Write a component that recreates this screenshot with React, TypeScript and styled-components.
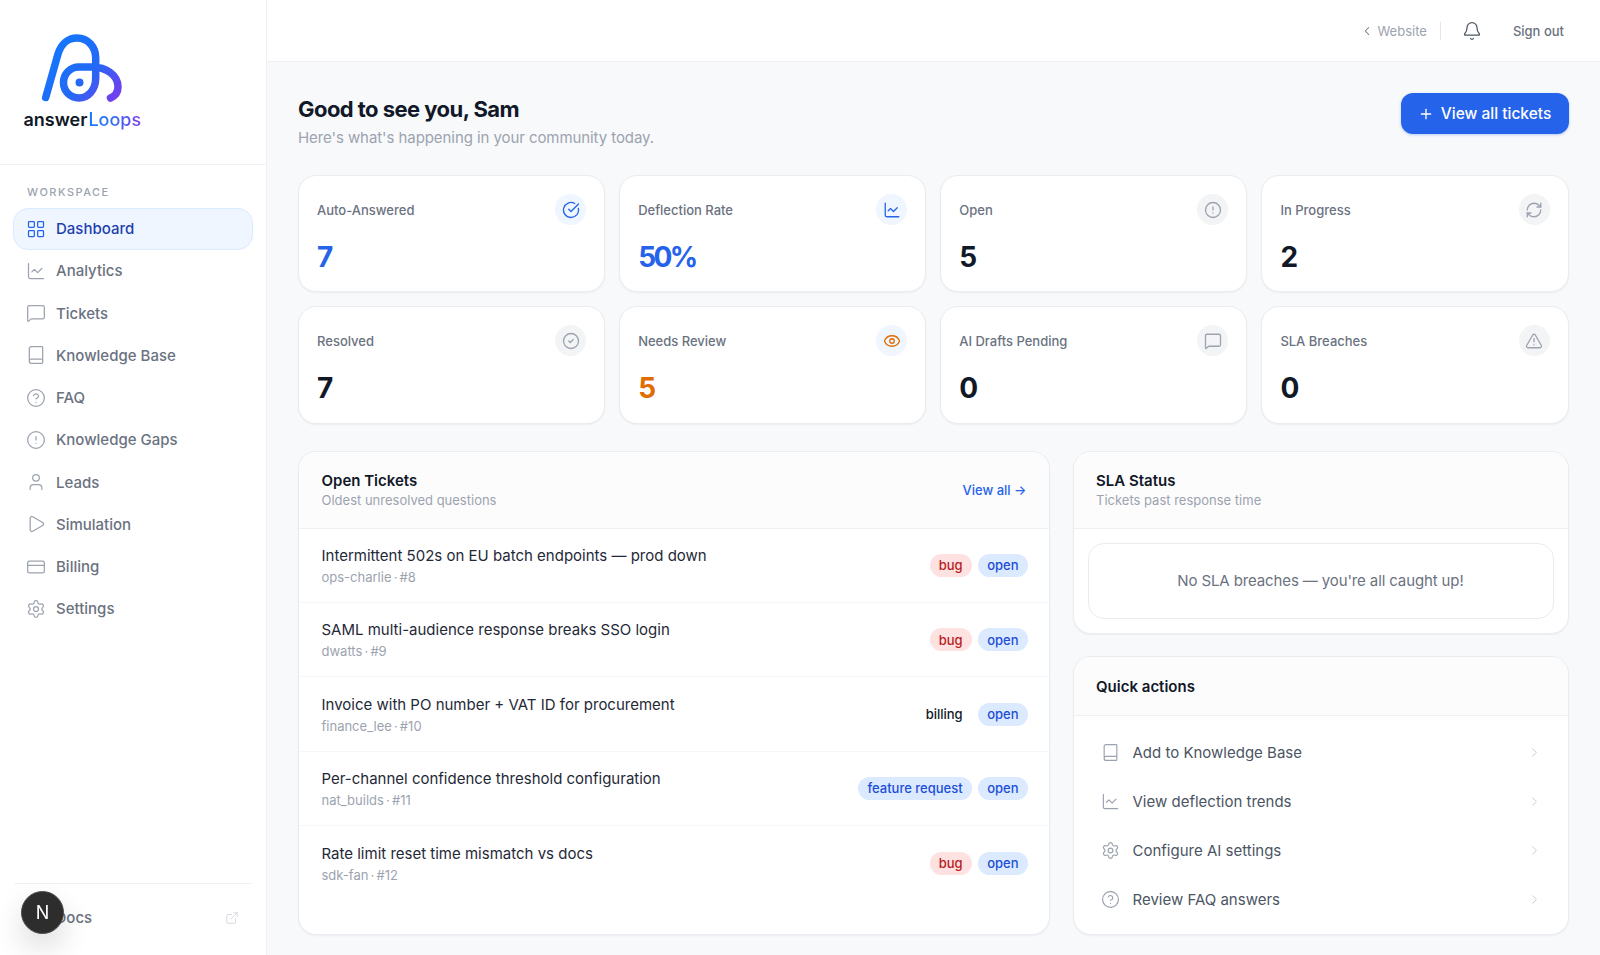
import React from "react";
import styled, { createGlobalStyle } from "styled-components";
import {
  LayoutGrid, ChartLine, MessageSquare, Book, CircleHelp, CircleAlert, User, Play, CreditCard, Settings,
  CircleCheckBig, CircleCheck, RefreshCw, TriangleAlert, Eye, ExternalLink, ChevronLeft, ChevronRight, Bell, Plus, FileText,
} from "lucide-react";

const Global = createGlobalStyle`
  html, body { margin: 0; padding: 0; height: 100%; overflow: hidden; }
  body { font-family: Inter, "Liberation Sans", sans-serif; background: #f8f9fb; color: #111827; }
  * { box-sizing: border-box; }
`;

const Shell = styled.div`
  display: flex;
  height: 100vh;
`;
const Sidebar = styled.aside`
  width: 266.5px;
  flex: none;
  background: #fff;
  border-right: 1.5px solid #eef0f3;
  display: flex;
  flex-direction: column;
`;
const LogoArea = styled.div`
  height: 165px;
  border-bottom: 1.5px solid #eef0f3;
  padding: 30px 0 0 23.5px;
`;
const LogoMark = styled.svg`
  display: block;
  margin-left: 15.5px;
`;
const LogoWord = styled.div`
  font-size: 18px;
  font-weight: 600;
  line-height: 24px;
  margin-top: 2px;
  color: #111827;
`;
const LogoAccent = styled.span`
  margin-left: 1px;
  font-weight: 500;
  background: linear-gradient(90deg, #1479ff 0%, #2f6ef5 45%, #7c3aed 100%);
  -webkit-background-clip: text;
  background-clip: text;
  color: transparent;
`;
const NavArea = styled.nav`
  flex: 1;
  padding: 19.5px 12.5px 0;
`;
const NavLabel = styled.div`
  font-size: 11px;
  line-height: 14px;
  font-weight: 500;
  letter-spacing: 0.135em;
  color: #9ca3af;
  padding-left: 14.5px;
  margin-bottom: 9px;
`;
const NavItem = styled.a<{ $active?: boolean }>`
  display: flex;
  align-items: center;
  gap: 10.5px;
  height: 42.25px;
  padding: 0 12px;
  border-radius: 15px;
  font-size: 15px;
  font-weight: 500;
  color: ${(p) => (p.$active ? "#1e40af" : "#6b7280")};
  background: ${(p) => (p.$active ? "#eff6ff" : "transparent")};
  border: 1px solid ${(p) => (p.$active ? "#dbeafe" : "transparent")};
  svg { color: ${(p) => (p.$active ? "#2563eb" : "#9ca3af")}; flex: none; }
`;
const DocsArea = styled.div`
  margin: 0 14px 0 13.5px;
  height: 72px;
  border-top: 1.5px solid #eef0f3;
  display: flex;
  align-items: center;
  padding: 0 11px 4px;
  gap: 11px;
  font-size: 15px;
  font-weight: 500;
  color: #6b7280;
  svg { color: #9ca3af; flex: none; }
`;
const DocsText = styled.span`
  flex: 1;
`;
const ExternalIcon = styled(ExternalLink)`
  && { color: #d1d5db; }
  margin-right: 2px;
`;
const DevBadge = styled.div`
  position: fixed;
  left: 21px;
  bottom: 21px;
  width: 43px;
  height: 43px;
  border-radius: 50%;
  background: #2d2d2d;
  border: 1.5px solid #4b4b4b;
  color: #fff;
  font-size: 18px;
  font-weight: 400;
  display: flex;
  align-items: center;
  justify-content: center;
  box-shadow: 0 14px 30px rgba(0, 0, 0, 0.14);
`;
const Main = styled.div`
  flex: 1;
  min-width: 0;
  display: flex;
  flex-direction: column;
`;
const TopBar = styled.header`
  height: 62px;
  flex: none;
  background: #fff;
  border-bottom: 1.5px solid #eef0f3;
  display: flex;
  align-items: center;
  justify-content: flex-end;
  padding: 0 36px 0 0;
  font-size: 13px;
`;
const BackLink = styled.a`
  display: flex;
  align-items: center;
  gap: 3px;
  color: #9ca3af;
  padding-right: 13.5px;
  border-right: 1px solid #e5e7eb;
  height: 18px;
  svg { color: #6b7280; }
`;
const BellIcon = styled(Bell)`
  color: #4b5563;
  margin: 0 31px 0 20.5px;
`;
const SignOut = styled.a`
  color: #6b7280;
  font-weight: 500;
  font-size: 13px;
`;
const Content = styled.main`
  flex: 1;
  padding: 31px 31.5px 20px 31.5px;
  display: flex;
  flex-direction: column;
`;
const PageHead = styled.div`
  display: flex;
  justify-content: space-between;
  align-items: flex-start;
  margin-bottom: 26px;
`;
const HeadText = styled.div`
  padding-top: 1px;
`;
const Title = styled.h1`
  margin: 0;
  font-size: 22px;
  line-height: 30px;
  font-weight: 700;
  letter-spacing: -0.025em;
  color: #111827;
`;
const Subtitle = styled.p`
  margin: 3px 0 0;
  font-size: 15px;
  line-height: 22px;
  letter-spacing: -0.005em;
  color: #9ca3af;
`;
const PrimaryButton = styled.button`
  height: 41px;
  width: 168px;
  border: none;
  border-radius: 12px;
  background: #2563eb;
  color: #fff;
  font: 500 15.5px Inter, sans-serif;
  display: flex;
  align-items: center;
  justify-content: center;
  gap: 7px;
  box-shadow: 0 1px 3px rgba(37, 99, 235, 0.3);
`;
const StatGrid = styled.section`
  display: grid;
  grid-template-columns: repeat(4, 1fr);
  grid-auto-rows: 117.3px;
  gap: 14px;
  margin-bottom: 27.5px;
`;
const StatCard = styled.div`
  background: #fff;
  border: 1px solid #eaecef;
  border-radius: 18px;
  padding: 18px;
  box-shadow: 0 1px 2px rgba(17, 24, 39, 0.05);
`;
const StatTop = styled.div`
  display: flex;
  justify-content: space-between;
  align-items: center;
  margin-bottom: 15px;
`;
const StatLabel = styled.span`
  font-size: 13px;
  font-weight: 500;
  color: #6b7280;
`;
const IconCircle = styled.span<{ $tint: string; $color: string }>`
  width: 31px;
  height: 31px;
  border-radius: 50%;
  background: ${(p) => p.$tint};
  color: ${(p) => p.$color};
  display: flex;
  align-items: center;
  justify-content: center;
`;
const StatValue = styled.div<{ $color: string }>`
  font-size: 28px;
  line-height: 34px;
  font-weight: 700;
  letter-spacing: -0.09em;
  color: ${(p) => p.$color};
`;
const PanelRow = styled.section`
  flex: 1;
  min-height: 0;
  display: grid;
  grid-template-columns: 1fr 496px;
  gap: 22.5px;
`;
const Panel = styled.div<{ $grow?: boolean }>`
  background: #fff;
  border: 1px solid #eaecef;
  border-radius: 18px;
  overflow: hidden;
  box-shadow: 0 1px 2px rgba(17, 24, 39, 0.05);
  flex: ${(p) => (p.$grow ? 1 : "none")};
`;
const PanelHead = styled.div<{ $compact?: boolean }>`
  height: ${(p) => (p.$compact ? "59px" : "76.5px")};
  padding: 1px 22.5px 0;
  background: #fcfcfd;
  border-bottom: 1.5px solid #eef0f3;
  display: flex;
  align-items: center;
  justify-content: space-between;
`;
const PanelTitle = styled.div`
  font-size: 15px;
  line-height: 20px;
  font-weight: 600;
  color: #111827;
`;
const PanelSub = styled.div`
  font-size: 13px;
  line-height: 19px;
  color: #9ca3af;
`;
const ViewAll = styled.a`
  font-size: 13px;
  font-weight: 500;
  color: #2563eb;
`;
const TicketRow = styled.div`
  height: 74.4px;
  padding: 0 21.5px 0 22.5px;
  display: flex;
  align-items: center;
  justify-content: space-between;
  border-bottom: 1px solid #f6f7f9;
  &:last-child { border-bottom: none; }
`;
const TicketText = styled.div`
  padding-top: 1.5px;
`;
const TicketTitle = styled.div`
  font-size: 15px;
  line-height: 22px;
  color: #1f2937;
`;
const TicketMeta = styled.div`
  font-size: 13px;
  line-height: 20px;
  word-spacing: -1.5px;
  color: #9ca3af;
`;
const Badges = styled.div`
  display: flex;
  align-items: center;
  gap: 6.5px;
`;
const Badge = styled.span<{ $kind: string }>`
  height: 23px;
  padding: 0 9px;
  border-radius: 12px;
  font-size: 13px;
  font-weight: 500;
  display: flex;
  align-items: center;
  background: ${(p) => (p.$kind === "bug" ? "#fee2e2" : p.$kind === "plain" ? "transparent" : "#dbeafe")};
  color: ${(p) => (p.$kind === "bug" ? "#b91c1c" : p.$kind === "plain" ? "#111827" : "#1d4ed8")};
`;
const RightColumn = styled.div`
  display: flex;
  flex-direction: column;
  gap: 22px;
`;
const EmptyWrap = styled.div`
  padding: 14px;
`;
const EmptyBox = styled.div`
  height: 76.5px;
  border: 1px solid #e9ebef;
  border-radius: 16px;
  display: flex;
  align-items: center;
  justify-content: center;
  font-size: 15px;
  letter-spacing: -0.12px;
  color: #6b7280;
`;
const ActionList = styled.div`
  padding: 12px 0 0;
`;
const ActionRow = styled.a`
  height: 49px;
  display: flex;
  align-items: center;
  padding: 0 26px 0 27px;
  gap: 13px;
  font-size: 15px;
  color: #4b5563;
  svg { color: #9ca3af; flex: none; }
`;
const ActionText = styled.span`
  flex: 1;
`;
const ActionChevron = styled(ChevronRight)`
  && { color: #c5c9d0; }
`;

const nav = [
  { label: "Dashboard", Icon: LayoutGrid, active: true },
  { label: "Analytics", Icon: ChartLine },
  { label: "Tickets", Icon: MessageSquare },
  { label: "Knowledge Base", Icon: Book },
  { label: "FAQ", Icon: CircleHelp },
  { label: "Knowledge Gaps", Icon: CircleAlert },
  { label: "Leads", Icon: User },
  { label: "Simulation", Icon: Play },
  { label: "Billing", Icon: CreditCard },
  { label: "Settings", Icon: Settings },
];

const BLUE = "#2563eb";
const DARK = "#111827";
const GREY = "#9ca3af";
const stats = [
  { label: "Auto-Answered", value: "7", color: BLUE, Icon: CircleCheckBig, tint: "#eff6ff", ic: BLUE },
  { label: "Deflection Rate", value: "50%", color: BLUE, Icon: ChartLine, tint: "#eff6ff", ic: BLUE },
  { label: "Open", value: "5", color: DARK, Icon: CircleAlert, tint: "#f3f4f6", ic: GREY },
  { label: "In Progress", value: "2", color: DARK, Icon: RefreshCw, tint: "#f3f4f6", ic: GREY },
  { label: "Resolved", value: "7", color: DARK, Icon: CircleCheck, tint: "#f3f4f6", ic: GREY },
  { label: "Needs Review", value: "5", color: "#df6d02", Icon: Eye, tint: "#eff6ff", ic: "#df6d02" },
  { label: "AI Drafts Pending", value: "0", color: DARK, Icon: MessageSquare, tint: "#f3f4f6", ic: GREY },
  { label: "SLA Breaches", value: "0", color: DARK, Icon: TriangleAlert, tint: "#f3f4f6", ic: GREY },
];

const tickets = [
  { title: "Intermittent 502s on EU batch endpoints — prod down", meta: "ops-charlie · #8", tag: "bug", kind: "bug" },
  { title: "SAML multi-audience response breaks SSO login", meta: "dwatts · #9", tag: "bug", kind: "bug" },
  { title: "Invoice with PO number + VAT ID for procurement", meta: "finance_lee · #10", tag: "billing", kind: "plain" },
  { title: "Per-channel confidence threshold configuration", meta: "nat_builds · #11", tag: "feature request", kind: "feature" },
  { title: "Rate limit reset time mismatch vs docs", meta: "sdk-fan · #12", tag: "bug", kind: "bug" },
];

const actions = [
  { label: "Add to Knowledge Base", Icon: Book },
  { label: "View deflection trends", Icon: ChartLine },
  { label: "Configure AI settings", Icon: Settings },
  { label: "Review FAQ answers", Icon: CircleHelp },
];

export default function App() {
  return (
    <Shell>
      <Global />
      <Sidebar>
        <LogoArea>
          <LogoMark width="90" height="76" viewBox="39 30 90 76" fill="none">
            <defs>
              <linearGradient id="loop" x1="45" y1="35" x2="120" y2="100" gradientUnits="userSpaceOnUse">
                <stop offset="0" stopColor="#0f7bff" />
                <stop offset="0.6" stopColor="#2468f5" />
                <stop offset="1" stopColor="#7c3aed" />
              </linearGradient>
            </defs>
            <path
              d="M45.7 97.5 L58 54 C61 44 68 38 77 38 C88 38 95.7 47 95.7 58 V78 C95.7 90 88 98 79 98 C70 98 63.5 91 63.5 82.5 C63.5 74 70 67 79 67 L92 67 C106 67 118 75 118 87 C118 92 115 96 110.5 98"
              stroke="url(#loop)"
              strokeWidth="7.5"
              strokeLinecap="round"
              strokeLinejoin="round"
            />
            <circle cx="79.5" cy="82.5" r="4" fill="#2468f5" />
          </LogoMark>
          <LogoWord>
            answer<LogoAccent>Loops</LogoAccent>
          </LogoWord>
        </LogoArea>
        <NavArea>
          <NavLabel>WORKSPACE</NavLabel>
          {nav.map(({ label, Icon, active }) => (
            <NavItem key={label} $active={active}>
              <Icon size={20} strokeWidth={1.5} />
              {label}
            </NavItem>
          ))}
        </NavArea>
        <DocsArea>
          <FileText size={20} strokeWidth={1.5} />
          <DocsText>Docs</DocsText>
          <ExternalIcon size={14} strokeWidth={1.5} />
        </DocsArea>
      </Sidebar>
      <DevBadge>N</DevBadge>
      <Main>
        <TopBar>
          <BackLink>
            <ChevronLeft size={14} strokeWidth={1.75} />
            Website
          </BackLink>
          <BellIcon size={20} strokeWidth={1.5} />
          <SignOut>Sign out</SignOut>
        </TopBar>
        <Content>
          <PageHead>
            <HeadText>
              <Title>Good to see you, Sam</Title>
              <Subtitle>Here's what's happening in your community today.</Subtitle>
            </HeadText>
            <PrimaryButton>
              <Plus size={16} strokeWidth={2} />
              View all tickets
            </PrimaryButton>
          </PageHead>
          <StatGrid>
            {stats.map(({ label, value, color, Icon, tint, ic }) => (
              <StatCard key={label}>
                <StatTop>
                  <StatLabel>{label}</StatLabel>
                  <IconCircle $tint={tint} $color={ic}>
                    <Icon size={18} strokeWidth={1.75} />
                  </IconCircle>
                </StatTop>
                <StatValue $color={color}>{value}</StatValue>
              </StatCard>
            ))}
          </StatGrid>
          <PanelRow>
            <Panel>
              <PanelHead>
                <div>
                  <PanelTitle>Open Tickets</PanelTitle>
                  <PanelSub>Oldest unresolved questions</PanelSub>
                </div>
                <ViewAll>View all →</ViewAll>
              </PanelHead>
              {tickets.map((t) => (
                <TicketRow key={t.meta}>
                  <TicketText>
                    <TicketTitle>{t.title}</TicketTitle>
                    <TicketMeta>{t.meta}</TicketMeta>
                  </TicketText>
                  <Badges>
                    <Badge $kind={t.kind}>{t.tag}</Badge>
                    <Badge $kind="open">open</Badge>
                  </Badges>
                </TicketRow>
              ))}
            </Panel>
            <RightColumn>
              <Panel>
                <PanelHead>
                  <div>
                    <PanelTitle>SLA Status</PanelTitle>
                    <PanelSub>Tickets past response time</PanelSub>
                  </div>
                </PanelHead>
                <EmptyWrap>
                  <EmptyBox>No SLA breaches — you're all caught up!</EmptyBox>
                </EmptyWrap>
              </Panel>
              <Panel $grow>
                <PanelHead $compact>
                  <PanelTitle>Quick actions</PanelTitle>
                </PanelHead>
                <ActionList>
                  {actions.map(({ label, Icon }) => (
                    <ActionRow key={label}>
                      <Icon size={19} strokeWidth={1.5} />
                      <ActionText>{label}</ActionText>
                      <ActionChevron size={15} strokeWidth={1.5} />
                    </ActionRow>
                  ))}
                </ActionList>
              </Panel>
            </RightColumn>
          </PanelRow>
        </Content>
      </Main>
    </Shell>
  );
}
